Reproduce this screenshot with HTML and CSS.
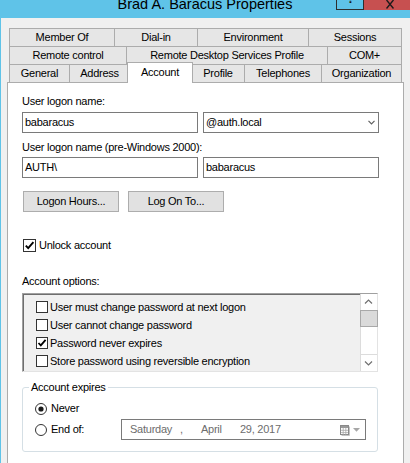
FILE: index.html
```html
<!DOCTYPE html>
<html>
<head>
<meta charset="utf-8">
<link rel="stylesheet" href="styles.css">
</head>
<body>
<div class="titlebar">
  <div class="title">Brad A. Baracus Properties</div>
  <div class="caption">
    <div class="cap-help"><span class="help-glyph">?</span></div>
    <div class="cap-close"><svg width="8" height="9" viewBox="0 0 8 9"><path d="M0.5 0 L7.5 8.5 M7.5 0 L0.5 8.5" stroke="#1a1a1a" stroke-width="1.4" fill="none"/></svg></div>
  </div>
</div>
<div class="dialog">
  <div class="tabs">
    <div class="tab-row">
      <div class="tab t-member">Member Of</div>
      <div class="tab t-dial">Dial-in</div>
      <div class="tab t-env">Environment</div>
      <div class="tab t-sess last">Sessions</div>
    </div>
    <div class="tab-row">
      <div class="tab t-remote">Remote control</div>
      <div class="tab t-rds">Remote Desktop Services Profile</div>
      <div class="tab t-com last">COM+</div>
    </div>
    <div class="tab-row row-front">
      <div class="tab t-general">General</div>
      <div class="tab t-address">Address</div>
      <div class="tab t-account sel">Account</div>
      <div class="tab t-profile">Profile</div>
      <div class="tab t-tel">Telephones</div>
      <div class="tab t-org last">Organization</div>
    </div>
  </div>
  <div class="panel">
    <div class="label first">User logon name:</div>
    <div class="field-row r1">
      <div class="input">babaracus</div>
      <div class="input select">
        <span>@auth.local</span>
        <svg class="sel-arrow" width="7" height="5" viewBox="0 0 7 5"><path d="M0.5 0.8 L3.5 3.8 L6.5 0.8" stroke="#606060" stroke-width="1.2" fill="none"/></svg>
      </div>
    </div>
    <div class="label second">User logon name (pre-Windows 2000):</div>
    <div class="field-row r2">
      <div class="input">AUTH\</div>
      <div class="input">babaracus</div>
    </div>
    <div class="btn-row">
      <div class="btn">Logon Hours...</div>
      <div class="btn">Log On To...</div>
    </div>
    <div class="check-row">
      <span class="cb big"><svg width="11" height="11" viewBox="0 0 11 11"><path d="M1.8 5.6 L4.2 8.2 L9.4 2.2" stroke="#000" stroke-width="1.9" fill="none"/></svg></span>
      <span class="cb-label">Unlock account</span>
    </div>
    <div class="label options">Account options:</div>
    <div class="listbox">
      <div class="items">
        <div class="item"><span class="cb"></span><span class="cb-label">User must change password at next logon</span></div>
        <div class="item"><span class="cb"></span><span class="cb-label">User cannot change password</span></div>
        <div class="item"><span class="cb"><svg width="10" height="10" viewBox="0 0 10 10"><path d="M1.5 5 L3.8 7.4 L8.6 1.8" stroke="#000" stroke-width="1.8" fill="none"/></svg></span><span class="cb-label">Password never expires</span></div>
        <div class="item"><span class="cb"></span><span class="cb-label">Store password using reversible encryption</span></div>
      </div>
      <div class="scrollbar">
        <div class="sb-btn up"><svg width="17" height="16" viewBox="0 0 17 16"><path d="M5 9.5 L8.5 6 L12 9.5" stroke="#707070" stroke-width="1.2" fill="none"/></svg></div>
        <div class="sb-thumb"></div>
        <div class="sb-track"></div>
        <div class="sb-btn down"><svg width="17" height="16" viewBox="0 0 17 16"><path d="M5 6.5 L8.5 10 L12 6.5" stroke="#707070" stroke-width="1.2" fill="none"/></svg></div>
      </div>
    </div>
    <fieldset class="group">
      <legend>Account expires</legend>
      <div class="radio-row never">
        <svg class="radio" width="12" height="12" viewBox="0 0 12 12"><circle cx="6" cy="6" r="5.5" fill="#fff" stroke="#333"/><circle cx="6" cy="6" r="2.6" fill="#1a1a1a"/></svg>
        <span class="radio-label">Never</span>
      </div>
      <div class="radio-row endof">
        <div class="radio-opt">
          <svg class="radio" width="12" height="12" viewBox="0 0 12 12"><circle cx="6" cy="6" r="5.5" fill="#fff" stroke="#333"/></svg>
          <span class="radio-label">End of:</span>
        </div>
        <div class="datepicker">
          <span class="seg-day">Saturday</span>
          <span class="seg-comma">,</span>
          <span class="seg-month">April</span>
          <span class="seg-rest">29, 2017</span>
          <svg class="cal" width="10" height="11" viewBox="0 0 10 11"><rect x="0.5" y="0.5" width="8" height="9" fill="#fff" stroke="#8a8a8a"/><rect x="1" y="1" width="7" height="2" fill="#9a9a9a"/><path d="M3.2 3 V10 M5.8 3 V10 M1 5.3 H8 M1 7.6 H8" stroke="#a8a8a8" stroke-width="0.8"/><path d="M9.5 1.5 V10.5 H1.5" stroke="#c4c4c4" fill="none"/></svg>
          <svg class="dd" width="7" height="4" viewBox="0 0 7 4"><path d="M0 0 H7 L3.5 3.8 Z" fill="#a6a6a6"/></svg>
        </div>
      </div>
    </fieldset>
  </div>
</div>
</body>
</html>
```

FILE: styles.css
```css
html, body {
  margin: 0;
  padding: 0;
}

body {
  width: 410px;
  height: 463px;
  overflow: hidden;
  background: #f0f0f0;
  font-family: "Liberation Sans", Arial, sans-serif;
  font-size: 11px;
  letter-spacing: -0.25px;
  color: #000;
}

/* ---------- title bar ---------- */
.titlebar {
  height: 18px;
  background: #5fc3e8;
  display: grid;
  overflow: hidden;
}

.title {
  grid-area: 1 / 1;
  justify-self: center;
  font-size: 14.5px;
  line-height: 18px;
  margin-top: -5px;
  letter-spacing: 0;
  color: #000;
}

.caption {
  grid-area: 1 / 1;
  justify-self: end;
  align-self: start;
  display: flex;
}

.cap-help {
  width: 26px;
  height: 9px;
  border: 1px solid #2e2e2e;
  border-top: 0;
  overflow: hidden;
  text-align: center;
}

.help-glyph {
  display: block;
  font-weight: bold;
  font-size: 13px;
  line-height: 13px;
  margin-top: -8px;
  padding-left: 1px;
  color: #1a1a1a;
}

.cap-close {
  width: 46px;
  height: 10px;
  background: #c75050;
  display: flex;
  justify-content: center;
  align-items: flex-end;
  overflow: hidden;
  box-sizing: border-box;
}

.cap-close svg {
  margin-left: 6px;
  margin-bottom: 1px;
}

/* ---------- dialog ---------- */
.dialog {
  border-left: 1px solid #5fc3e8;
  padding: 10px 6px 0 6px;
  height: 445px;
  box-sizing: border-box;
  overflow: hidden;
}

.tabs {
  margin: 0 2px;
}

.tab-row {
  display: flex;
  height: 18px;
}

.tab {
  box-sizing: border-box;
  height: 18px;
  flex: none;
  border-top: 1px solid #acacac;
  border-left: 1px solid #acacac;
  background: #e6e6e6;
  display: flex;
  align-items: center;
  justify-content: center;
  line-height: 13px;
  white-space: nowrap;
}

.tab.last {
  border-right: 1px solid #acacac;
}

.t-member { width: 105px; }
.t-dial { width: 83px; }
.t-env { width: 111px; }
.t-sess { width: 94px; }
.t-remote { width: 117px; }
.t-rds { width: 201px; }
.t-com { width: 75px; }
.t-general { width: 60px; }
.t-address { width: 60px; }
.t-account { width: 66px; }
.t-profile { width: 53px; }
.t-tel { width: 77px; }
.t-org { width: 81px; }

.row-front {
  align-items: flex-start;
}

.tab.sel {
  height: 21px;
  margin: -2px -2px -1px;
  background: #fff;
  border-right: 1px solid #acacac;
  position: relative;
  z-index: 1;
  align-items: flex-start;
  padding-top: 3px;
}

/* ---------- panel ---------- */
.panel {
  background: #fff;
  border: 1px solid #acacac;
  height: 380px;
  padding: 12px 0 0 14px;
}

.label {
  line-height: 13px;
  height: 13px;
  white-space: nowrap;
}

.label.second {
  margin-top: 8px;
}

.label.options {
  margin-top: 23px;
}

.field-row {
  display: flex;
  gap: 5px;
}

.field-row.r1 {
  margin-top: 4px;
}

.field-row.r2 {
  margin-top: 3px;
}

.input {
  box-sizing: border-box;
  width: 176px;
  height: 21px;
  border: 1px solid #7a7a7a;
  background: #fff;
  padding-left: 2px;
  display: flex;
  align-items: center;
  line-height: 13px;
  white-space: nowrap;
}

.select .sel-arrow {
  margin-left: auto;
  margin-right: 3px;
}

.btn-row {
  display: flex;
  gap: 9px;
  margin-top: 13px;
  margin-left: 1px;
}

.btn {
  box-sizing: border-box;
  width: 96px;
  height: 21px;
  border: 1px solid #adadad;
  background: #e1e1e1;
  display: flex;
  align-items: center;
  justify-content: center;
  line-height: 13px;
}

.check-row {
  display: flex;
  align-items: center;
  margin-top: 27px;
  margin-left: 1px;
  height: 13px;
}

.cb {
  box-sizing: border-box;
  width: 12px;
  height: 12px;
  border: 1px solid #333;
  background: #fff;
  display: flex;
  align-items: center;
  justify-content: center;
  flex: none;
}

.cb.big {
  width: 13px;
  height: 13px;
}

.cb-label {
  margin-left: 2px;
  line-height: 13px;
  white-space: nowrap;
}

.check-row .cb-label {
  margin-left: 3px;
}

/* ---------- list ---------- */
.listbox {
  box-sizing: border-box;
  margin-top: 5px;
  width: 356px;
  height: 79px;
  border: 1px solid;
  border-color: #a0a0a0 #e3e3e3 #e3e3e3 #a0a0a0;
  box-shadow: inset 1px 1px 0 #6e6e6e;
  background: #f0f0f0;
  display: flex;
}

.items {
  flex: 1;
  padding: 4px 0 0 13px;
  overflow: hidden;
}

.item {
  height: 18px;
  display: flex;
  align-items: center;
}

.scrollbar {
  width: 17px;
  flex: none;
  display: flex;
  flex-direction: column;
  background: #fff;
  box-sizing: border-box;
  border-left: 1px solid #dcdcdc;
}

.sb-btn {
  height: 17px;
  box-sizing: border-box;
  display: flex;
  align-items: center;
  justify-content: center;
}

.sb-btn svg {
  margin-left: -1px;
}

.sb-btn.up {
  border-bottom: 1px solid #dcdcdc;
}

.sb-btn.down {
  border-top: 1px solid #dcdcdc;
}

.sb-thumb {
  height: 17px;
  box-sizing: border-box;
  background: #dadada;
  border: 1px solid #a8a8a8;
  margin: -1px -1px 0 -1px;
}

.sb-track {
  flex: 1;
}

/* ---------- group box ---------- */
.group {
  box-sizing: border-box;
  width: 356px;
  margin: 9px 0 0 0;
  padding: 8px 0 11px 12px;
  border: 1px solid #d5dfe5;
  border-radius: 3px;
  min-width: 0;
}

.group legend {
  padding: 0 2px;
  margin-left: -6px;
  line-height: 13px;
  font-size: 11px;
}

.radio-row {
  display: flex;
  align-items: center;
}

.radio-row.never {
  height: 13px;
  margin-bottom: 4px;
}

.radio-row.endof {
  height: 21px;
}

.radio-opt {
  display: flex;
  align-items: center;
  width: 86px;
  flex: none;
}

.radio {
  flex: none;
  display: block;
}

.radio-label {
  margin-left: 4px;
  line-height: 13px;
}

.datepicker {
  box-sizing: border-box;
  width: 245px;
  height: 21px;
  border: 1px solid #7a7a7a;
  background: #fff;
  color: #6d6d6d;
  display: flex;
  align-items: center;
  padding-left: 8px;
  line-height: 13px;
  white-space: nowrap;
}

.seg-day { width: 50px; flex: none; }
.seg-comma { width: 21px; flex: none; }
.seg-month { width: 39px; flex: none; }
.seg-rest { flex: none; }

.datepicker .cal {
  margin-left: auto;
  margin-top: 1px;
}

.datepicker .dd {
  margin-left: 3px;
  margin-right: 5px;
  margin-top: 1px;
}
```
